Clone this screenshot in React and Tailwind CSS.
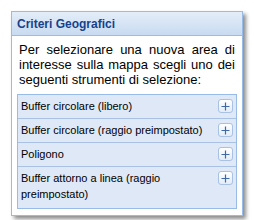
import React from "react";

const font = { fontFamily: '"Liberation Sans", Arial, sans-serif' };

function Plus() {
  return (
    <div className="w-[15px] h-[14px] rounded-[3px] border border-[#a9c1e2] bg-gradient-to-b from-[#ffffff] to-[#e3ecf8] flex items-center justify-center shrink-0">
      <svg width="9" height="9" viewBox="0 0 9 9">
        <path d="M4.5 0.5V8.5M0.5 4.5H8.5" stroke="#3f6aa6" strokeWidth="1.2" />
      </svg>
    </div>
  );
}

function Row({ children, last, h }) {
  return (
    <div
      className={`flex items-start justify-between pl-[3px] pr-[3px] ${last ? "" : "border-b border-[#a9c1e2]"} ${h}`}
    >
      <div className="text-[11px] leading-[16px] text-[#000] pt-[3px] w-[190px]">{children}</div>
      <div className="pt-[4px]">
        <Plus />
      </div>
    </div>
  );
}

export default function App() {
  return (
    <div className="w-[254px] h-[220px] bg-white pt-[11px] pl-[11px]" style={font}>
      <div className="w-[232px] h-[205px] border border-[#99bbe8] bg-white shadow-[3px_3px_4px_rgba(0,0,0,0.45)] flex flex-col">
        <div className="h-[24px] border-b border-[#99bbe8] bg-gradient-to-b from-[#e4edf9] to-[#c9dbf1] px-[5px] flex items-center text-[12px] font-bold text-[#15428b]">
          Criteri Geografici
        </div>
        <div className="px-[5px] pt-[6px]">
          <div className="px-[2px] text-[13px] leading-[15px] text-black text-justify">
            <div className="[text-align-last:justify]">Per selezionare una nuova area di</div>
            <div className="[text-align-last:justify]">interesse sulla mappa scegli uno dei</div>
            <div>seguenti strumenti di selezione:</div>
          </div>
          <div className="mt-[7px] border border-[#99bbe8] bg-[#dfe8f6]">
            <Row h="h-[24px]">Buffer circolare (libero)</Row>
            <Row h="h-[24px]">Buffer circolare (raggio preimpostato)</Row>
            <Row h="h-[24px]">Poligono</Row>
            <Row last h="h-[41px]">Buffer attorno a linea (raggio preimpostato)</Row>
          </div>
        </div>
      </div>
    </div>
  );
}
